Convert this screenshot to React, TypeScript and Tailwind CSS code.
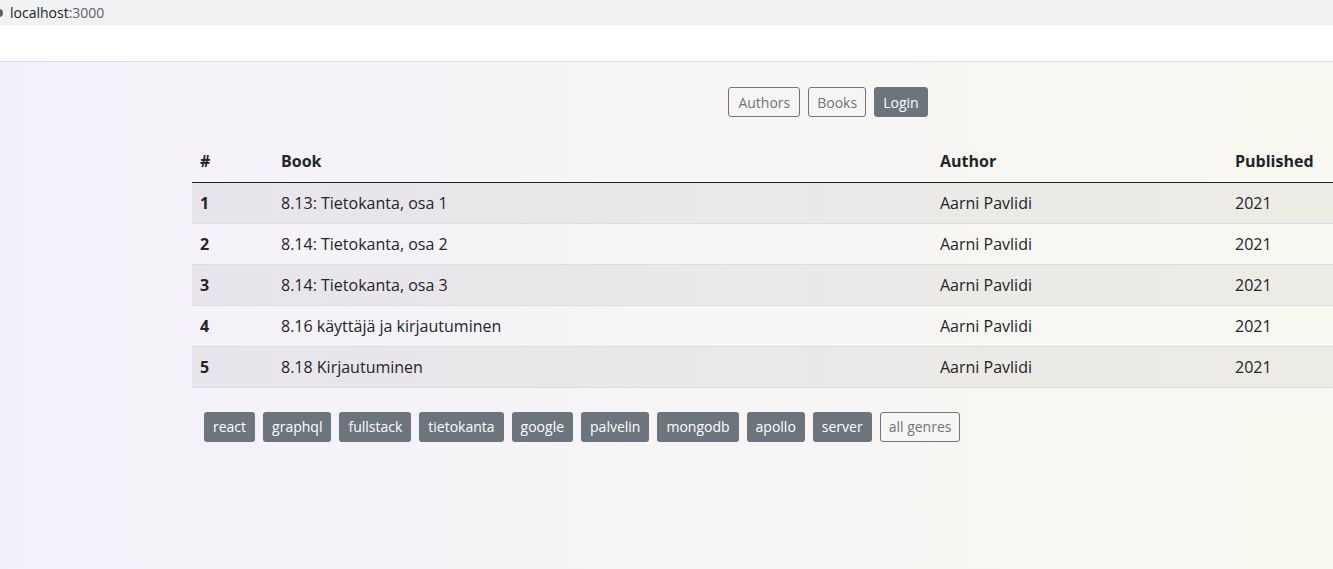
import React from "react";

const books = [
  ["1", "8.13: Tietokanta, osa 1"],
  ["2", "8.14: Tietokanta, osa 2"],
  ["3", "8.14: Tietokanta, osa 3"],
  ["4", "8.16 käyttäjä ja kirjautuminen"],
  ["5", "8.18 Kirjautuminen"],
];

const genres = ["react", "graphql", "fullstack", "tietokanta", "google", "palvelin", "mongodb", "apollo", "server"];

export default function App() {
  return (
    <div className="w-[1333px] h-[569px] overflow-hidden flex flex-col">
      <div className="h-[25px] bg-[#f0f2f4] flex items-center text-[14px] text-[#202124] font-['Open_Sans',sans-serif] shrink-0">
        <div className="w-[8px] h-[8px] rounded-full bg-[#5f6368] -ml-[5px] mr-[7px]" />
        <span className="text-[#202124]">localhost</span>
        <span className="text-[#5f6368]">:3000</span>
      </div>
      <div className="h-[37px] bg-white border-b border-[#dadce0] shrink-0" />
      <div className="flex-1 bg-gradient-to-r from-[#f4f0fa] to-[#f9f9f1] font-['Comic_Sans_MS','Open_Sans',sans-serif] text-[#212529]">
        <div className="ml-[192px] w-[1272px]">
          <div className="flex justify-center gap-[8px] pt-[25px] text-[14px]">
            <button className="h-[30px] px-[9px] rounded-[3px] border border-[#6c757d] text-[#6c757d]">Authors</button>
            <button className="h-[30px] px-[8px] rounded-[3px] border border-[#6c757d] text-[#6c757d]">Books</button>
            <button className="h-[30px] px-[8px] rounded-[3px] border border-[#6c757d] bg-[#6c757d] text-white">Login</button>
          </div>
          <table className="mt-[24px] w-full text-[16px] border-collapse">
            <thead>
              <tr className="border-b border-[#212529] h-[41px]">
                <th className="w-[81px] px-[8px] text-left font-bold">#</th>
                <th className="w-[659px] px-[8px] text-left font-bold">Book</th>
                <th className="w-[295px] px-[8px] text-left font-bold">Author</th>
                <th className="px-[8px] text-left font-bold">Published</th>
              </tr>
            </thead>
            <tbody>
              {books.map(([n, t], i) => (
                <tr key={n} className={`h-[41px] border-b border-[#dcdbdf] ${i % 2 === 0 ? "bg-black/[0.05]" : ""}`}>
                  <td className="px-[8px] font-bold">{n}</td>
                  <td className="px-[8px]">{t}</td>
                  <td className="px-[8px]">Aarni Pavlidi</td>
                  <td className="px-[8px]">2021</td>
                </tr>
              ))}
            </tbody>
          </table>
          <div className="flex gap-[8px] ml-[12px] mt-[24px] text-[14px]">
            {genres.map((g) => (
              <button key={g} className="h-[30px] px-[9px] rounded-[3px] bg-[#6c757d] text-white">{g}</button>
            ))}
            <button className="h-[30px] px-[8px] rounded-[3px] border border-[#6c757d] text-[#6c757d]">all genres</button>
          </div>
        </div>
      </div>
    </div>
  );
}
